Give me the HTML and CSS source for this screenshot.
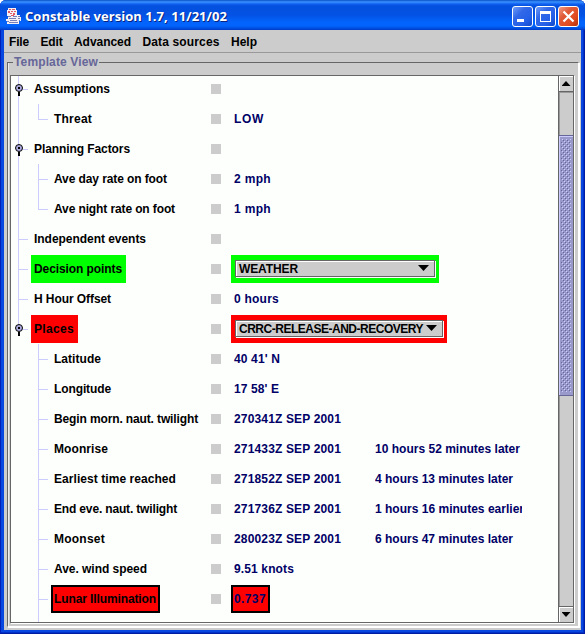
FILE: index.html
```html
<!DOCTYPE html>
<html lang="en">
<head>
<meta charset="utf-8">
<title>Constable</title>
<link rel="stylesheet" href="styles.css">
</head>
<body>
<div class="window">
  <header class="titlebar">
    <svg class="java" width="16" height="17" viewBox="0 0 16 17" shape-rendering="crispEdges">
      <path fill="#f4eef5" d="M2 0h8v2h1v5h3v2h1v4h-2v3H1v-3H0v-2h2V8H1V2h1z"/>
      <path fill="#e05a66" d="M3 1h2v1H3zM6 1h3v1H6zM2 3h2v2H2zM5 3h2v1H5zM8 3h2v1H8zM4 5h2v1H4zM7 5h2v2H7zM5 7h3v1H5z"/>
      <path fill="#7780b8" d="M2 8h3v1H2zM7 8h4v1H7zM12 8h2v1h-2zM3 10h7v1H3zM12 10h2v1h-2zM4 12h7v1H4zM1 13h2v1H1zM3 14h9v1H3zM13 12h1v1h-1z"/>
    </svg>
    <h1 data-w="202">Constable version 1.7, 11/21/02</h1>
    <div class="controls">
      <svg class="ctl" width="21" height="21"><path fill="#fff" d="M4 12h7v3H4z"/></svg>
      <svg class="ctl" width="21" height="21"><path fill="#fff" fill-rule="evenodd" d="M4 4h11v11H4zM5 7h9v7H5z"/></svg>
      <svg class="ctl close" width="21" height="21"><path stroke="#fff" stroke-width="2.2" d="M4.500 4.500l10 10M14.500 4.500l-10 10"/></svg>
    </div>
  </header>
  <nav class="menubar">
    <span data-w="20">File</span><span data-w="22">Edit</span><span data-w="57">Advanced</span><span data-w="77">Data sources</span><span data-w="26">Help</span>
  </nav>
  <main class="client">
    <fieldset class="group">
      <legend><span data-w="84">Template View</span></legend>
      <div class="scrollpane">
        <div class="view">
          <div class="row top"><i class="knob"></i><b class="label"><span data-w="76">Assumptions</span></b><i class="mark"></i></div>
          <div class="row sub last"><b class="label"><span data-w="38">Threat</span></b><i class="mark"></i><b class="value"><span data-w="30">LOW</span></b></div>
          <div class="row top"><i class="knob"></i><b class="label"><span data-w="96">Planning Factors</span></b><i class="mark"></i></div>
          <div class="row sub"><b class="label"><span data-w="113">Ave day rate on foot</span></b><i class="mark"></i><b class="value"><span data-w="37">2 mph</span></b></div>
          <div class="row sub last"><b class="label"><span data-w="121">Ave night rate on foot</span></b><i class="mark"></i><b class="value"><span data-w="37">1 mph</span></b></div>
          <div class="row top"><b class="label"><span data-w="112">Independent events</span></b><i class="mark"></i></div>
          <div class="row top"><b class="label green"><span data-w="88">Decision points</span></b><i class="mark"></i><div class="combo-wrap green"><div class="combo"><span data-w="59">WEATHER</span><i class="arrow"></i></div></div></div>
          <div class="row top"><b class="label"><span data-w="77">H Hour Offset</span></b><i class="mark"></i><b class="value"><span data-w="45">0 hours</span></b></div>
          <div class="row top end"><i class="knob"></i><b class="label red"><span data-w="40">Places</span></b><i class="mark"></i><div class="combo-wrap red wide"><div class="combo"><span data-w="184">CRRC-RELEASE-AND-RECOVERY</span><i class="arrow"></i></div></div></div>
          <div class="row sub"><b class="label"><span data-w="47">Latitude</span></b><i class="mark"></i><b class="value"><span data-w="46">40 41' N</span></b></div>
          <div class="row sub"><b class="label"><span data-w="57">Longitude</span></b><i class="mark"></i><b class="value"><span data-w="45">17 58' E</span></b></div>
          <div class="row sub"><b class="label"><span data-w="144">Begin morn. naut. twilight</span></b><i class="mark"></i><b class="value"><span data-w="107">270341Z SEP 2001</span></b></div>
          <div class="row sub"><b class="label"><span data-w="54">Moonrise</span></b><i class="mark"></i><b class="value"><span data-w="107">271433Z SEP 2001</span></b><b class="delta"><span data-w="145">10 hours 52 minutes later</span></b></div>
          <div class="row sub"><b class="label"><span data-w="122">Earliest time reached</span></b><i class="mark"></i><b class="value"><span data-w="107">271852Z SEP 2001</span></b><b class="delta"><span data-w="138">4 hours 13 minutes later</span></b></div>
          <div class="row sub"><b class="label"><span data-w="123">End eve. naut. twilight</span></b><i class="mark"></i><b class="value"><span data-w="107">271736Z SEP 2001</span></b><b class="delta"><span data-w="149">1 hours 16 minutes earlier</span></b></div>
          <div class="row sub"><b class="label"><span data-w="51">Moonset</span></b><i class="mark"></i><b class="value"><span data-w="107">280023Z SEP 2001</span></b><b class="delta"><span data-w="138">6 hours 47 minutes later</span></b></div>
          <div class="row sub"><b class="label"><span data-w="93">Ave. wind speed</span></b><i class="mark"></i><b class="value"><span data-w="60">9.51 knots</span></b></div>
          <div class="row sub"><b class="label red boxed"><span data-w="102">Lunar Illumination</span></b><i class="mark"></i><b class="value red boxed"><span data-w="32">0.737</span></b></div>
          <div class="row sub"></div>
        </div>
        <div class="scrollbar">
          <div class="sbtn"><i class="tri up"></i></div>
          <div class="track"><div class="thumb"><i></i></div></div>
          <div class="sbtn"><i class="tri down"></i></div>
        </div>
      </div>
    </fieldset>
  </main>
</div>
<script src="fit.js"></script>
</body>
</html>
```
FILE: styles.css
```css
* { box-sizing: border-box; }
html, body { margin: 0; height: 100%; overflow: hidden; background: #fff; }
body { font: bold 12px/15px "Liberation Sans", Arial, sans-serif; color: #000; }
[data-w] { white-space: nowrap; }

.window {
  width: 585px; height: 634px;
  display: flex; flex-direction: column;
  padding: 0 4px 4px;
  background: #0846e0;
  border-radius: 6px 6px 0 0;
  box-shadow: inset 1px 0 #0020b8, inset -1px -1px #001ca0, inset -2px -2px #0030c8;
}

.titlebar {
  height: 30px; flex: none;
  margin: 0 -4px;
  padding: 2px 6px 0 6px;
  display: flex; align-items: center;
  border-radius: 6px 6px 0 0;
  background: linear-gradient(#0a50c8 0, #3a94ff 2px, #1060f0 4px, #0450de 6px, #0452e4 15px, #0264fc 22px, #0264fc 26px, #0048d8 29px, #0038c0 30px);
}
.java { flex: none; }
.titlebar h1 {
  margin: 0 auto 0 3px;
  font: bold 13px/18px "Open Sans", "Noto Sans", sans-serif;
  color: #fff; text-shadow: 1px 1px #0a2480;
}
.controls { display: flex; gap: 2px; }
.ctl {
  border: 1px solid #fff; border-radius: 3px;
  background: linear-gradient(135deg, #6f9cf8 0, #3268e8 35%, #2460e8 70%, #1048c8 100%);
}
.close { background: linear-gradient(135deg, #f09c84 0, #e05a38 35%, #e04c20 70%, #b83008 100%); }

.menubar {
  height: 23px; flex: none;
  display: flex; gap: 11.5px;
  padding: 5px 0 0 5px;
  background: #ccc; border-bottom: 1px solid #999;
}

.client { flex: 1; min-height: 0; background: #ccc; padding: 2px 2px 3px 3px; display: flex; }
.group {
  flex: 1; min-width: 0; margin: 0; padding: 6px 3px 2px 2px;
  border: 1px solid #666; border-right-color: #fff; border-bottom-color: #fff;
  box-shadow: inset 1px 0 #eee, 1px 1px #fff;
  display: flex;
}
.group legend { margin-left: 3px; padding: 1px 1px 0; color: #669; line-height: 13px; background: #ccc; }

.scrollpane {
  width: 564px; height: 548px;
  display: flex;
  border: 1px solid #666; box-shadow: 1px 1px #fff;
}
.view { flex: 1; min-width: 0; overflow: hidden; background: #fdfffd; }

.row { height: 30px; position: relative; display: flex; align-items: center; }
.view > .row:first-child { margin-top: -2px; }
.row::before { content: ""; position: absolute; left: 7px; top: 0; width: 1px; height: 30px; background: #ccf; }
.row.end::before { height: 15px; }
.row.end ~ .row::before { display: none; }
.row.top::after { content: ""; position: absolute; left: 8px; top: 15px; width: 9px; height: 1px; background: #ccf; }
.row.sub {
  background:
    linear-gradient(#ccf, #ccf) 27px 0 / 1px 30px no-repeat,
    linear-gradient(#ccf, #ccf) 28px 15px / 9px 1px no-repeat;
}
.row.last {
  background:
    linear-gradient(#ccf, #ccf) 27px 0 / 1px 16px no-repeat,
    linear-gradient(#ccf, #ccf) 28px 15px / 9px 1px no-repeat;
}
.row:last-child { background-size: 1px 30px, 0 0; }

.knob {
  position: absolute; z-index: 1; left: 4px; top: 10px;
  width: 8px; height: 8px; border-radius: 50%;
  border: 1px solid #000; background: radial-gradient(circle, #000 0 1px, #aaaadd 1.5px);
}
.knob::after { content: ""; position: absolute; left: 2px; top: 7px; width: 2px; height: 4px; background: #000; }

.label { flex: none; margin-left: 20px; padding-left: 3px; height: 28px; line-height: 28px; }
.row.sub .label { margin-left: 40px; }
.green { background: #0f0; }
.red { background: #f00; }
.label.green { width: 95px; }
.label.red { width: 47px; }
.label.boxed { width: 109px; }
.boxed { border: 2px solid #000; line-height: 24px; }
.row .label.boxed, .value.boxed { padding-left: 1px; }

.mark { position: absolute; left: 200px; top: 10px; width: 10px; height: 10px; background: #ccc; }
.value, .combo-wrap, .delta { position: absolute; top: 1px; height: 28px; line-height: 28px; color: #006; }
.value, .combo-wrap { left: 220px; padding-left: 3px; }
.value.boxed { width: 39px; line-height: 24px; }
.delta { left: 364px; width: 147px; overflow: hidden; }
.combo-wrap { width: 208px; padding: 5px 4px; color: #000; }
.combo-wrap.wide { width: 216px; }
.combo {
  height: 17px; padding: 1px 5px 0 3px;
  display: flex; align-items: center; justify-content: space-between;
  border: 1px solid #666; box-shadow: inset 1px 1px #fff, 1px 1px #fff;
  background: #ccc; line-height: 15px;
}
.arrow { width: 11px; height: 6px; margin-top: -2px; background: #000; clip-path: polygon(0 0, 100% 0, 50% 100%); }

.scrollbar { width: 15px; display: flex; flex-direction: column; border-left: 1px solid #666; background: #ccc; }
.sbtn {
  height: 16px; flex: none; display: grid; place-items: center;
  border: solid #666; border-width: 0 0 1px; box-shadow: inset 1px 1px #fff;
}
.sbtn:last-child { border-width: 1px 0 0; }
.tri { width: 9px; height: 5px; background: #000; }
.up { clip-path: polygon(50% 0, 100% 100%, 0 100%); }
.down { clip-path: polygon(0 0, 100% 0, 50% 100%); }
.track { flex: 1; padding-top: 43px; box-shadow: inset 1px 1px #999; }
.thumb { height: 261px; padding: 3px 2px; background: #99c; border: 1px solid #669; border-width: 1px 0; box-shadow: inset 1px 1px #ccf; }
.thumb i {
  display: block; height: 100%;
  background:
    radial-gradient(circle at .5px .5px, #ccf .7px, transparent .8px) 1px 0 / 4px 4px,
    radial-gradient(circle at .5px .5px, #ccf .7px, transparent .8px) 3px 2px / 4px 4px,
    radial-gradient(circle at .5px .5px, #669 .7px, transparent .8px) 2px 1px / 4px 4px,
    radial-gradient(circle at .5px .5px, #669 .7px, transparent .8px) 0 3px / 4px 4px;
}
```
FILE: fit.js
```js
// Track each label so that it fills its nominal width.
document.querySelectorAll('[data-w]').forEach(el => {
  const range = document.createRange();
  range.selectNodeContents(el);
  const natural = range.getBoundingClientRect().width;
  el.style.letterSpacing = (el.dataset.w - natural) / el.textContent.length + 'px';
});
```
